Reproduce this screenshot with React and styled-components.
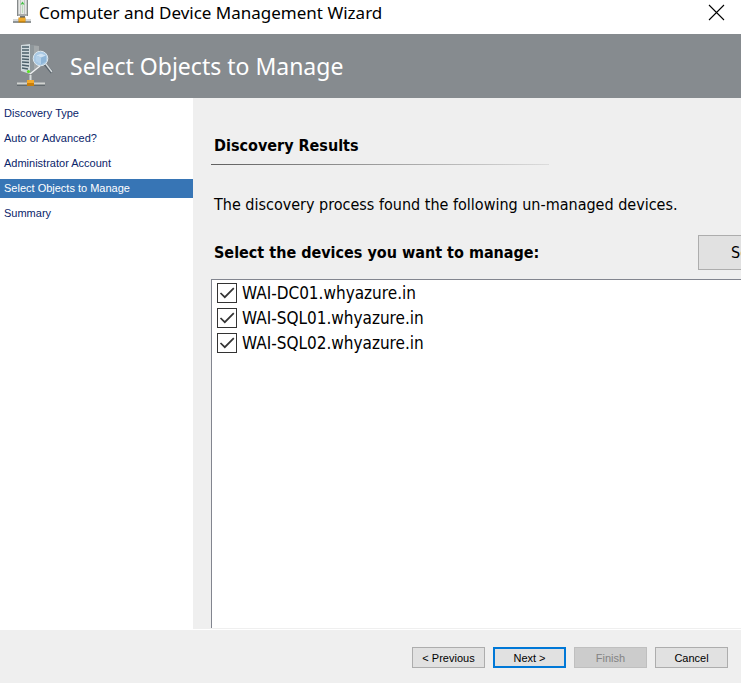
import { useState } from "react";
import styled, { createGlobalStyle, css } from "styled-components";

const GlobalStyle = createGlobalStyle`
  * {
    box-sizing: border-box;
  }
  body {
    margin: 0;
    background-color: #efefef;
    color: #000;
  }
`;

const uiFont = '"Noto Sans", "Open Sans", sans-serif';
const bodyFont = '"DejaVu Sans Condensed", "DejaVu Sans", sans-serif';
const smallFont = '"Liberation Sans", Arial, sans-serif';

const Window = styled.div`
  display: flex;
  flex-direction: column;
  min-height: 100vh;
  overflow: hidden;
`;

const TitleBar = styled.div`
  display: flex;
  height: 34px;
  padding: 0 16px 10px 12px;
  background-color: #fff;
`;

const WindowTitle = styled.span`
  flex: 1;
  margin-left: 7px;
  font: 17px/26px ${uiFont};
  white-space: nowrap;
`;

const CloseButton = styled.button`
  display: flex;
  align-items: center;
  padding: 0;
  border: none;
  background: none;
`;

const Banner = styled.header`
  display: flex;
  align-items: center;
  gap: 16px;
  height: 64px;
  padding-left: 16px;
  background-color: #868b8f;
`;

const BannerTitle = styled.h1`
  margin: 0;
  color: #fff;
  font: 23px/32px ${uiFont};
  white-space: nowrap;
`;

const Body = styled.div`
  display: flex;
  flex: 1;
`;

const Steps = styled.nav`
  display: flex;
  flex-direction: column;
  flex: none;
  gap: 6px;
  width: 193px;
  padding-top: 6px;
  background-color: #fff;
`;

const Step = styled.a`
  padding-left: 4px;
  color: #0a246a;
  font: 11px/19px ${smallFont};
  text-decoration: none;

  ${(props) =>
    props.$active &&
    css`
      background-color: #3775b5;
      color: #fff;
    `}
`;

const Main = styled.main`
  display: flex;
  flex-direction: column;
  flex: 1;
  min-width: 0;
  padding: 36px 0 1px 18px;
  border-bottom: 1px solid #fff;
  font: 16px/24px ${bodyFont};
  white-space: nowrap;
`;

const Heading = styled.h2`
  margin: 0;
  padding-left: 3px;
  font-size: 16px;
  line-height: 24px;
`;

const Rule = styled.hr`
  width: 338px;
  height: 1px;
  margin: 6px 0 28px;
  border: none;
  background: linear-gradient(to right, #606060, #dcdcdc);
`;

const Description = styled.p`
  margin: 0;
  padding-left: 3px;
`;

/* the list and its toolbar run past the right edge of the window */
const Wide = styled.section`
  display: flex;
  flex-direction: column;
  flex: 1;
  margin: 18px -90px 0 0;
`;

const ListBar = styled.div`
  display: flex;
  align-items: center;
  justify-content: space-between;
  margin-bottom: 9px;
`;

const SelectAllButton = styled.button`
  width: 133px;
  height: 35px;
  padding: 0;
  border: 1px solid #adadad;
  background-color: #e1e1e1;
  font: 16px/24px ${bodyFont};
`;

const DeviceList = styled.div`
  flex: 1;
  padding: 0 5px;
  border: 1px solid #82858f;
  border-bottom: none;
  background-color: #fff;
`;

const Device = styled.label`
  display: flex;
  align-items: center;
  gap: 5px;
  height: 25px;
  font-size: 17px;
  line-height: 26px;
`;

const CheckBox = styled.input`
  appearance: none;
  width: 20px;
  height: 20px;
  margin: 0;
  border: 1px solid #333;
  background-color: #fff;

  &:checked {
    background-image: url("data:image/svg+xml,%3Csvg xmlns='http://www.w3.org/2000/svg' viewBox='0 0 18 18'%3E%3Cpath d='M2.5 9l4.3 4.2 9-9' fill='none' stroke='%23333' stroke-width='1.7'/%3E%3C/svg%3E");
  }
`;

const Footer = styled.footer`
  display: flex;
  justify-content: flex-end;
  gap: 8px;
  padding: 17px 13px 15px;
`;

const WizardButton = styled.button`
  width: 73px;
  height: 21px;
  padding: 0;
  border: 1px solid #adadad;
  background-color: #e1e1e1;
  color: #000;
  font: 11px/16px ${smallFont};

  ${(props) =>
    props.$primary &&
    css`
      border: 2px solid #0078d7;
    `}

  &:disabled {
    border-color: #bfbfbf;
    background-color: #ccc;
    color: #838383;
  }
`;

const ServerIcon = () => (
  <svg width="20" height="24" viewBox="0 0 20 24" aria-hidden="true">
    <path d="M5 0h11v16H5z" fill="#a9acac" />
    <path d="M6.500 0h8v14h-8z" fill="#e6e8e6" />
    <path d="M8.500 0v14M12.500 0v14" stroke="#c4c8c5" />
    <path d="M5.500 0v16M15.500 0v16" stroke="#85898a" />
    <path d="M8.500 4.500l2-3 2 3z" fill="#43bf45" />
    <path d="M10.500 4v9" stroke="#bcdcbb" />
    <path d="M8 16h5v2H8z" fill="#6f7375" />
    <path d="M1 19h18v4H1z" fill="#8f9496" />
    <path d="M1 19h18v2H1z" fill="#d5d7d7" />
    <path d="M6.500 17.500h7v5h-7z" fill="#c9860f" />
    <path d="M7 18h6v3H7z" fill="#f0aa2c" />
  </svg>
);

const DiscoveryIcon = () => (
  <svg width="38" height="46" viewBox="0 0 38 46" aria-hidden="true">
    <path d="M14 2l9 1v20l-9 8z" fill="#a3a8aa" />
    <path d="M14 2h4v26l-4 3z" fill="#8f979b" />
    <path d="M5 2l9-1v30l-9-3z" fill="#cfd8dc" />
    <path
      d="M6 4h7M6 7h7M6 10h7M6 13l7 .5M6 16l7 .5M6 19l7 .5M6 22l7 1M6 25l6 1"
      stroke="#4b5f6a"
      strokeWidth="1.3"
    />
    <path d="M14 31l10-8" stroke="#f0f2f2" strokeWidth="1.4" />
    <path d="M29 21l7 8.500" stroke="#59636b" strokeWidth="3" />
    <path d="M29.500 20.500l6.500 8.500" stroke="#d5dadc" strokeWidth="1.500" />
    <circle cx="24.500" cy="15.500" r="7.300" fill="#a9c9e4" stroke="#dde8ef" />
    <path d="M20 12.500l5-2 5 2v6l-5 3-5-3z" fill="#8fb6d8" />
    <path d="M20 12.500l5-2 5 2-5 2z" fill="#cfe2f2" />
    <path d="M20 12.500l5 2v7l-5-3z" fill="#b4d1ea" />
    <circle cx="12.500" cy="28.500" r="1.600" fill="#5be321" />
    <path d="M14.500 32v5" stroke="#d7dcdc" strokeWidth="2" />
    <path d="M1 40h28v3H1z" fill="#626a6e" />
    <path d="M1 39.500h28v2H1z" fill="#d1d3d0" />
    <path d="M11 37h7v6h-7z" fill="#c97f0b" />
    <path d="M11 37h7v3h-7z" fill="#f5ab2c" />
  </svg>
);

const steps = [
  "Discovery Type",
  "Auto or Advanced?",
  "Administrator Account",
  "Select Objects to Manage",
  "Summary",
];

const devices = [
  "WAI-DC01.whyazure.in",
  "WAI-SQL01.whyazure.in",
  "WAI-SQL02.whyazure.in",
];

const App = () => {
  const [selected, setSelected] = useState(devices);

  const toggle = (name) =>
    setSelected(
      selected.includes(name)
        ? selected.filter((item) => item !== name)
        : [...selected, name]
    );

  return (
    <Window>
      <GlobalStyle />
      <TitleBar>
        <ServerIcon />
        <WindowTitle>Computer and Device Management Wizard</WindowTitle>
        <CloseButton aria-label="Close">
          <svg width="17" height="17" viewBox="0 0 17 17">
            <path d="M1 1l15 15M16 1L1 16" stroke="#000" strokeWidth="1.1" />
          </svg>
        </CloseButton>
      </TitleBar>
      <Banner>
        <DiscoveryIcon />
        <BannerTitle>Select Objects to Manage</BannerTitle>
      </Banner>
      <Body>
        <Steps>
          {steps.map((step) => (
            <Step key={step} href="#" $active={step === steps[3]}>
              {step}
            </Step>
          ))}
        </Steps>
        <Main>
          <Heading>Discovery Results</Heading>
          <Rule />
          <Description>
            The discovery process found the following un-managed devices.
          </Description>
          <Wide>
            <ListBar>
              <Heading>Select the devices you want to manage:</Heading>
              <SelectAllButton onClick={() => setSelected(devices)}>
                Select All
              </SelectAllButton>
            </ListBar>
            <DeviceList>
              {devices.map((name) => (
                <Device key={name}>
                  <CheckBox
                    type="checkbox"
                    checked={selected.includes(name)}
                    onChange={() => toggle(name)}
                  />
                  {name}
                </Device>
              ))}
            </DeviceList>
          </Wide>
        </Main>
      </Body>
      <Footer>
        <WizardButton>&lt; Previous</WizardButton>
        <WizardButton $primary>Next &gt;</WizardButton>
        <WizardButton disabled>Finish</WizardButton>
        <WizardButton>Cancel</WizardButton>
      </Footer>
    </Window>
  );
};

export default App;
